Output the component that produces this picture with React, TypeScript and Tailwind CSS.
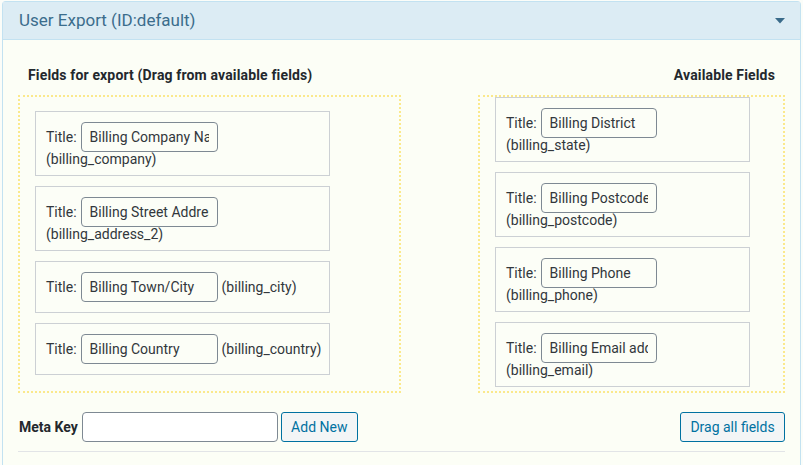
import React from "react";

type Field = {
  title: string;
  key: string;
  inline?: boolean;
};

const exportFields: Field[] = [
  { title: "Billing Company Name", key: "billing_company" },
  { title: "Billing Street Address 2", key: "billing_address_2" },
  { title: "Billing Town/City", key: "billing_city", inline: true },
  { title: "Billing Country", key: "billing_country", inline: true },
];

const availableFields: Field[] = [
  { title: "Billing District", key: "billing_state" },
  { title: "Billing Postcode/ZIP", key: "billing_postcode" },
  { title: "Billing Phone", key: "billing_phone" },
  { title: "Billing Email address", key: "billing_email" },
];

function FieldItem({ field, width, inputWidth }: { field: Field; width: string; inputWidth: string }) {
  return (
    <li
      className={`${width} border border-[#ccd0d4] bg-[#fcfef7] px-[10px] pt-[10px] ${
        field.inline ? "pb-[10px]" : "pb-[8px]"
      } mb-[10px] last:mb-0`}
    >
      <div className={`flex items-center ${field.inline ? "flex-nowrap whitespace-nowrap" : "flex-wrap"}`}>
        <span className="mr-[4px]">Title:</span>
        <input
          readOnly
          value={field.title}
          className={`${inputWidth} shrink-0 h-[30px] rounded-[4px] border border-[#7e8993] bg-transparent px-[8px] text-[#32373c] outline-none`}
        />
        {field.inline ? (
          <span className="ml-[4px]">({field.key})</span>
        ) : (
          <span className="w-full leading-[15px]">({field.key})</span>
        )}
      </div>
    </li>
  );
}

export default function App() {
  return (
    <div
      className="min-h-[465px] bg-[#fbfdf9] pl-[2px] pt-[1px] text-[14px] text-[#32373c]"
      style={{ fontFamily: "Roboto, 'Liberation Sans', sans-serif" }}
    >
      <div className="w-[799px] min-h-[464px] rounded-t-[4px] border border-b-0 border-[#c3e2f1] bg-[#fcfef6]">
        <div className="flex h-[38px] items-center justify-between border-b border-[#c3e2f1] bg-[#dcecf4] pl-[16px] pr-[15px]">
          <h2 className="text-[17px] text-[#3b6d8c]">User Export (ID:default)</h2>
          <svg width="10" height="6" viewBox="0 0 10 6" className="mt-[1px]">
            <path d="M0 0 H10 L5 5.5 Z" fill="#3a6b8a" />
          </svg>
        </div>

        <div className="px-[15px] pt-[26px]">
          <div className="grid grid-cols-[383px_307px] justify-between">
            <h3 className="pl-[10px] text-[14px] font-bold leading-[18px] tracking-[0.15px] text-[#23282d]">
              Fields for export (Drag from available fields)
            </h3>
            <h3 className="pr-[10px] text-right text-[14px] font-bold leading-[18px] tracking-[0.15px] text-[#23282d]">
              Available Fields
            </h3>

            <ul className="mt-[11px] border-2 border-dotted border-[#fbe98c] pl-[15px] pt-[14px] pb-[16px]">
              {exportFields.map((f) => (
                <FieldItem key={f.key} field={f} width="w-[295px]" inputWidth="w-[137px]" />
              ))}
            </ul>
            <ul className="mt-[11px] border-2 border-dotted border-[#fbe98c] pl-[15px] pt-0 pb-[4px]">
              {availableFields.map((f) => (
                <FieldItem key={f.key} field={f} width="w-[255px]" inputWidth="w-[116px]" />
              ))}
            </ul>
          </div>

          <div className="mt-[19px] flex items-center justify-between pb-[9px] border-b border-[#e2e4e7]">
            <div className="flex items-center pl-[1px]">
              <span className="mr-[4px] text-[14px] font-bold text-[#23282d]">Meta Key</span>
              <input className="h-[30px] w-[196px] rounded-[4px] border border-[#7e8993] bg-white outline-none" />
              <button className="ml-[3px] h-[30px] w-[77px] rounded-[3px] border border-[#0071a1] bg-[#f3f5f6] text-[14px] text-[#0071a1]">
                Add New
              </button>
            </div>
            <button className="h-[30px] w-[105px] rounded-[3px] border border-[#0071a1] bg-[#f3f5f6] text-[14px] text-[#0071a1]">
              Drag all fields
            </button>
          </div>
        </div>
      </div>
    </div>
  );
}
